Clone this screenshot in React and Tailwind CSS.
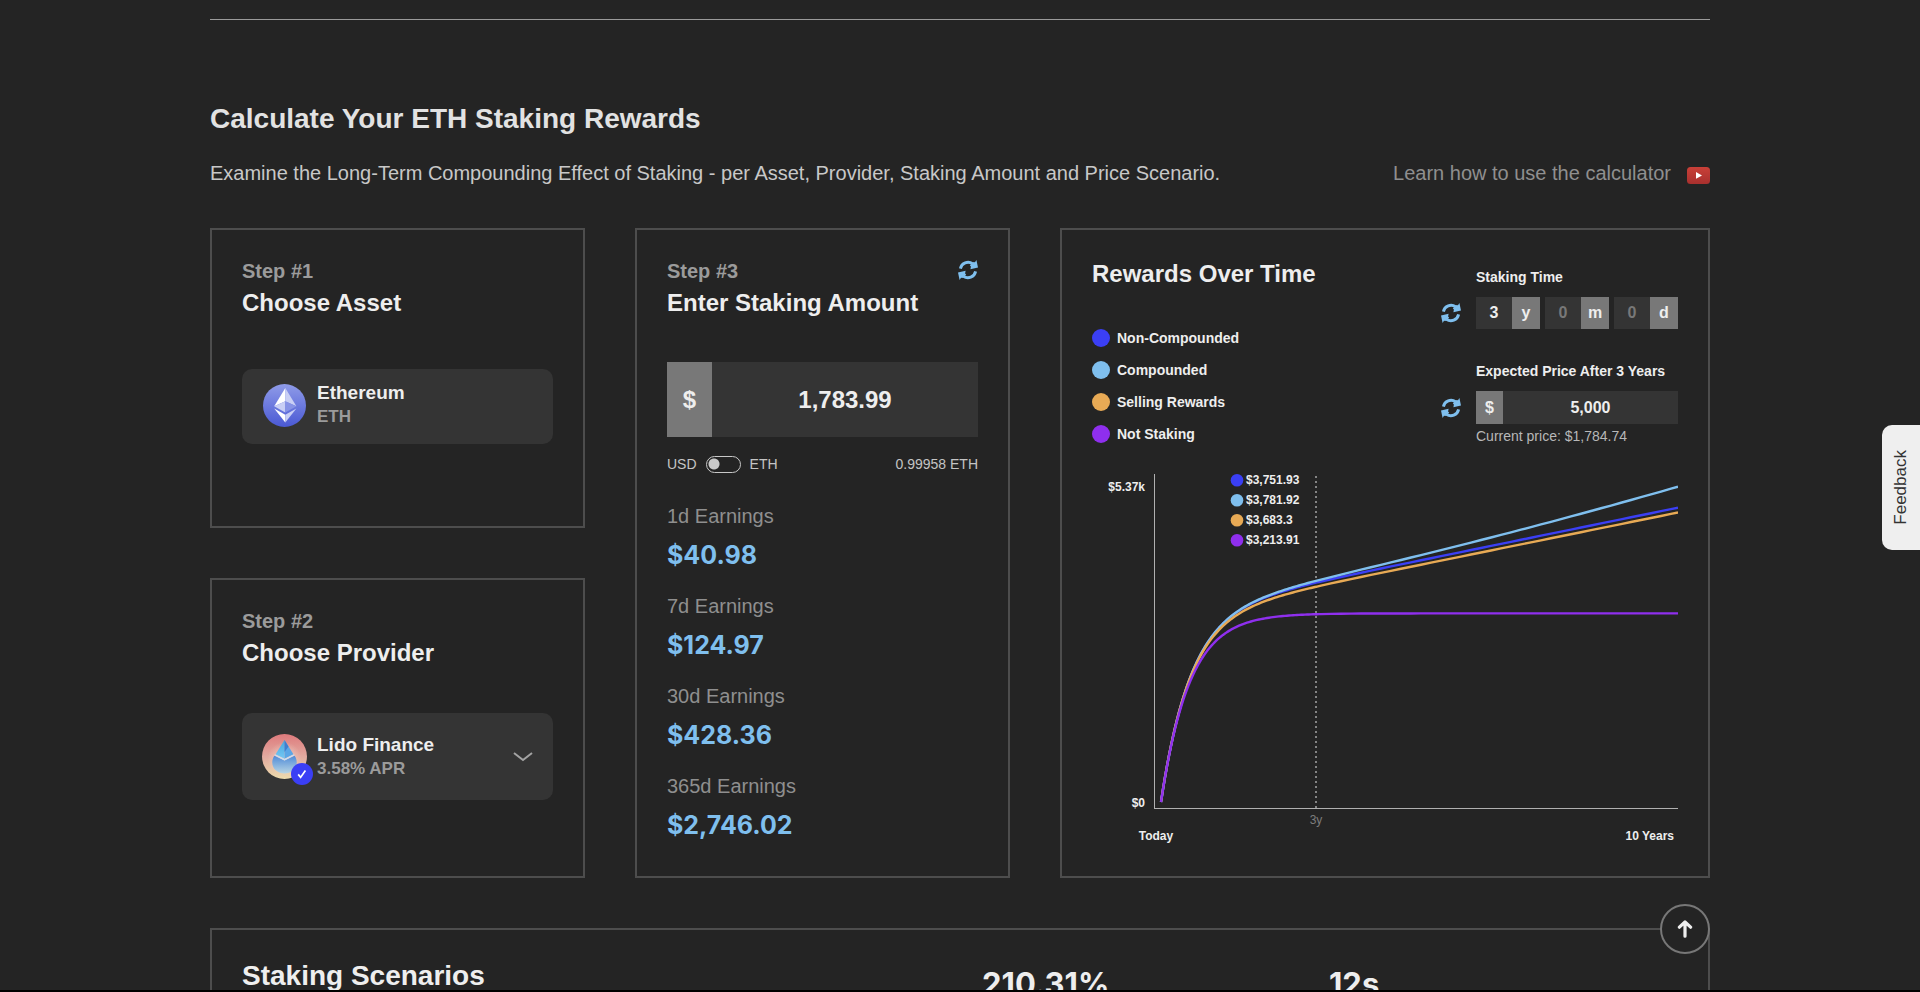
import React from "react";

const earnings = [
  { label: "1d Earnings", value: "$40.98" },
  { label: "7d Earnings", value: "$124.97" },
  { label: "30d Earnings", value: "$428.36" },
  { label: "365d Earnings", value: "$2,746.02" },
];

const legend = [
  { label: "Non-Compounded", dot: "bg-[#3b3ff5]" },
  { label: "Compounded", dot: "bg-[#7fbfee]" },
  { label: "Selling Rewards", dot: "bg-[#e8aa55]" },
  { label: "Not Staking", dot: "bg-[#8f2fee]" },
];

// Share of the expected price reached at distance u along the time axis.
const reached = (u) => 1 - Math.exp(-0.035 * u);

const series = [
  { name: "Non-Compounded", color: "#3b3ff5", value: "$3,751.93", gain: (u) => 0.2045 * u * reached(u) },
  { name: "Compounded", color: "#7fbfee", value: "$3,781.92", gain: (u) => (0.2037 * u + 0.00008 * u * u) * reached(u) },
  { name: "Selling Rewards", color: "#e8aa55", value: "$3,683.3", gain: (u) => 0.203 * (u - 20 * reached(u)) },
  { name: "Not Staking", color: "#8f2fee", value: "$3,213.91", gain: () => 0 },
];

function curve(gain) {
  const points = [];
  for (let u = 0; u < 517; u += u < 160 ? 2 : 10) points.push(u);
  points.push(517);
  return points
    .map((u) => {
      const y = 328 - 188.6 * reached(u) - Math.max(0, gain(u));
      return `${69 + u},${y.toFixed(2)}`;
    })
    .join(" ");
}

function RefreshButton({ label }) {
  return (
    <button type="button" aria-label={label} className="shrink-0 text-[#7fbfee]">
      <svg viewBox="0 0 20 20" className="block size-5" aria-hidden="true">
        <g>
          <path d="M2.4 8.6A7.8 7.8 0 0 1 14.6 3.8" fill="none" stroke="currentColor" strokeWidth="2.9" />
          <path d="M18.4 0 20 7.4 12.4 9.2 12.9 6.4 11.8 5.2 15.6 1.9 17 2.3Z" fill="currentColor" />
        </g>
        <g transform="rotate(180 10 10)">
          <path d="M2.4 8.6A7.8 7.8 0 0 1 14.6 3.8" fill="none" stroke="currentColor" strokeWidth="2.9" />
          <path d="M18.4 0 20 7.4 12.4 9.2 12.9 6.4 11.8 5.2 15.6 1.9 17 2.3Z" fill="currentColor" />
        </g>
      </svg>
    </button>
  );
}

function EthereumLogo() {
  return (
    <svg viewBox="0 0 43 43" className="size-[43px] shrink-0" aria-hidden="true">
      <defs>
        <linearGradient id="ethBg" x1="0" y1="0" x2="0" y2="1">
          <stop offset="0" stopColor="#8f9be8" />
          <stop offset="1" stopColor="#4a59d4" />
        </linearGradient>
      </defs>
      <circle cx="21.5" cy="21.5" r="21.5" fill="url(#ethBg)" />
      <path d="M22.3 4 11.2 22.2 22.3 17.3Z" fill="#fff" />
      <path d="M22.3 4 33.4 22.2 22.3 17.3Z" fill="#c9cff5" />
      <path d="M22.3 17.3 11.2 22.2 22.3 28.6Z" fill="#c9cff5" />
      <path d="M22.3 17.3 33.4 22.2 22.3 28.6Z" fill="#8793e6" />
      <path d="M11.2 24.4 22.3 30.8V38.4Z" fill="#fff" />
      <path d="M33.4 24.4 22.3 30.8V38.4Z" fill="#c9cff5" />
    </svg>
  );
}

function LidoLogo() {
  return (
    <span className="relative size-[45px] shrink-0">
      <svg viewBox="0 0 45 45" className="block size-[45px]" aria-hidden="true">
        <defs>
          <linearGradient id="lidoBg" x1="0" y1="0" x2="0" y2="1">
            <stop offset="0" stopColor="#de7a7c" />
            <stop offset="0.5" stopColor="#e2aaa0" />
            <stop offset="1" stopColor="#eddcae" />
          </linearGradient>
          <radialGradient id="lidoGlow">
            <stop offset="0" stopColor="#f3d6cc" stopOpacity="0.9" />
            <stop offset="1" stopColor="#f3d6cc" stopOpacity="0" />
          </radialGradient>
          <linearGradient id="lidoDrop" x1="0" y1="0" x2="0" y2="1">
            <stop offset="0" stopColor="#4f8bd8" />
            <stop offset="1" stopColor="#b9d6e4" />
          </linearGradient>
          <linearGradient id="lidoLeft" x1="0" y1="0" x2="0" y2="1">
            <stop offset="0" stopColor="#45a6dc" />
            <stop offset="1" stopColor="#74c8f4" />
          </linearGradient>
        </defs>
        <circle cx="22.5" cy="22.5" r="22.5" fill="url(#lidoBg)" />
        <circle cx="22.5" cy="25" r="17" fill="url(#lidoGlow)" />
        <path d="M12.4 21.8C8.8 27 10 33 14 36.6 18.6 40.6 26.4 40.6 31 36.6 35 33 36.2 27 32.6 21.8L22.5 26.6Z" fill="url(#lidoDrop)" />
        <path d="M22.5 6 13.6 20.2 22.5 24.8Z" fill="url(#lidoLeft)" />
        <path d="M22.5 6 31.4 20.2 22.5 24.8Z" fill="#5aa6e6" />
        <path d="M22.5 6 26.5 12.4 22.5 18Z" fill="#3d7fcf" />
        <path d="M12.6 20.8 22.5 25.8 32.4 20.8" fill="none" stroke="#c9dff2" strokeWidth="1.2" />
      </svg>
      <svg viewBox="0 0 22 22" className="absolute -right-1.5 -bottom-1.5 size-[22px]" aria-hidden="true">
        <circle cx="11" cy="11" r="11" fill="#3b3ff5" />
        <path d="M7.2 11.4 9.6 14.4 14.4 7.6" fill="none" stroke="#fff" strokeWidth="1.7" />
      </svg>
    </span>
  );
}

function StepHeading({ step, title }) {
  return (
    <div>
      <p className="text-xl leading-[22px] font-bold text-[#9b9b9b]">{step}</p>
      <h3 className="mt-1 text-2xl leading-[34px] font-bold">{title}</h3>
    </div>
  );
}

function TimeField({ id, unit, value, placeholder, label }) {
  return (
    <div className="flex h-8 min-w-0 flex-1 bg-[#343434] text-base font-bold">
      <input
        id={id}
        aria-label={label}
        defaultValue={value}
        placeholder={placeholder}
        className="w-0 min-w-0 flex-1 bg-transparent text-center outline-none placeholder:text-[#787878]"
      />
      <span className="flex w-7 items-center justify-center bg-[#787878]">{unit}</span>
    </div>
  );
}

function RewardsChart() {
  return (
    <svg viewBox="0 0 586 372" className="mt-[26px] block w-full" role="img" aria-label="Rewards over time">
      <line x1="62.5" y1="0" x2="62.5" y2="335" stroke="#b0b0b0" />
      <line x1="62" y1="334.5" x2="586" y2="334.5" stroke="#b0b0b0" />
      <line x1="224" y1="2" x2="224" y2="334" stroke="#858585" strokeWidth="2" strokeDasharray="2 3" />
      {series.map((s) => (
        <polyline key={s.name} points={curve(s.gain)} fill="none" stroke={s.color} strokeWidth="2.4" strokeLinejoin="round" />
      ))}
      {series.map((s, i) => (
        <circle key={s.name} cx="145" cy={6.3 + i * 20} r="6.3" fill={s.color} />
      ))}
      <g className="fill-[#eeeeee] text-xs font-bold">
        {series.map((s, i) => (
          <text key={s.name} x="154" y={10 + i * 20}>{s.value}</text>
        ))}
        <text x="53" y="17" textAnchor="end">$5.37k</text>
        <text x="53" y="333" textAnchor="end">$0</text>
        <text x="64" y="366" textAnchor="middle">Today</text>
        <text x="582" y="366" textAnchor="end">10 Years</text>
      </g>
      <text x="224" y="350" textAnchor="middle" className="fill-[#7d7d7d] text-xs">3y</text>
    </svg>
  );
}

export default function App() {
  return (
    <div className="h-screen overflow-y-auto bg-[#242424] font-['Liberation_Sans',Arial,sans-serif] text-[#eeeeee] [scrollbar-width:none]">
      <main className="mx-auto w-full max-w-[1500px] pt-[19px]">
        <hr className="border-[#9a9a9a]" />

        <header className="pt-[81px]">
          <h2 className="text-[28px] leading-9 font-bold text-[#e2e2e2]">Calculate Your ETH Staking Rewards</h2>
          <div className="mt-[21px] flex items-center justify-between gap-6 text-xl leading-[30px]">
            <p className="text-[#c8c8c8]">
              Examine the Long-Term Compounding Effect of Staking - per Asset, Provider, Staking Amount and Price Scenario.
            </p>
            <a href="#guide" className="flex shrink-0 items-center gap-4 text-[#8f8f8f]">
              Learn how to use the calculator
              <svg viewBox="0 0 23 17" className="mt-1 w-[23px]" aria-hidden="true">
                <defs>
                  <linearGradient id="play" x1="0" y1="0" x2="0" y2="1">
                    <stop offset="0" stopColor="#c94038" />
                    <stop offset="1" stopColor="#a8302e" />
                  </linearGradient>
                </defs>
                <rect width="23" height="17" rx="3.5" fill="url(#play)" />
                <path d="M9 5 15 8.4 9 11.8Z" fill="#fff" />
              </svg>
            </a>
          </div>
        </header>

        <div className="mt-10 grid grid-cols-[375fr_375fr_650fr] gap-[50px]">
          <div className="flex flex-col gap-[50px]">
            <section className="flex min-h-[300px] flex-1 flex-col border-2 border-[#4d4d4d] p-[30px]">
              <StepHeading step="Step #1" title="Choose Asset" />
              <div className="flex flex-1 flex-col justify-center pb-[3px]">
                <button type="button" className="flex h-[75px] items-center gap-[11px] rounded-[10px] bg-[#343434] pr-5 pb-[3px] pl-[21px] text-left">
                  <EthereumLogo />
                  <span>
                    <span className="block text-[19px] leading-6 font-bold">Ethereum</span>
                    <span className="block text-[17px] leading-6 font-bold text-[#9b9b9b]">ETH</span>
                  </span>
                </button>
              </div>
            </section>
            <section className="flex min-h-[300px] flex-1 flex-col border-2 border-[#4d4d4d] p-[30px]">
              <StepHeading step="Step #2" title="Choose Provider" />
              <div className="flex flex-1 flex-col justify-center pb-[3px]">
                <button type="button" className="flex h-[87px] items-center gap-2.5 rounded-[10px] bg-[#343434] px-5 text-left">
                  <LidoLogo />
                  <span>
                    <span className="block text-[19px] leading-6 font-bold">Lido Finance</span>
                    <span className="block text-[17px] leading-6 font-bold text-[#9b9b9b]">3.58% APR</span>
                  </span>
                  <svg viewBox="0 0 20 10" className="ml-auto w-5" aria-hidden="true">
                    <path d="M1 1 10 8 19 1" fill="none" stroke="#a3a3a3" strokeWidth="2" />
                  </svg>
                </button>
              </div>
            </section>
          </div>

          <section className="border-2 border-[#4d4d4d] p-[30px]">
            <div className="flex items-start justify-between">
              <StepHeading step="Step #3" title="Enter Staking Amount" />
              <RefreshButton label="Reset amount" />
            </div>
            <label className="mt-[42px] flex h-[75px] bg-[#343434] text-2xl font-bold">
              <span className="flex w-[45px] items-center justify-center bg-[#787878]">$</span>
              <input aria-label="Staking amount" defaultValue="1,783.99" className="w-0 min-w-0 flex-1 bg-transparent text-center outline-none" />
            </label>
            <div className="mt-[17px] flex h-5 items-center justify-between text-sm text-[#c4c4c4]">
              <label className="flex items-center gap-[9px]">
                USD
                <input
                  type="checkbox"
                  role="switch"
                  aria-label="Enter amount in ETH"
                  className="h-[17px] w-[35px] appearance-none rounded-full border border-[#c8c8c8] bg-[radial-gradient(circle_at_7px_7px,#c8c8c8_5px,transparent_6px)]"
                />
                ETH
              </label>
              <span>0.99958 ETH</span>
            </div>
            <dl className="mt-[29px] flex flex-col gap-6">
              {earnings.map((e) => (
                <div key={e.label}>
                  <dt className="text-xl leading-[26px] text-[#8f8f8f]">{e.label}</dt>
                  <dd className="mt-3 font-[Inter] text-[25px] leading-7 font-bold text-[#7fbfee]">{e.value}</dd>
                </div>
              ))}
            </dl>
          </section>

          <section className="border-2 border-[#4d4d4d] p-[30px]">
            <div className="flex justify-between">
              <div>
                <h3 className="text-2xl leading-7 font-bold">Rewards Over Time</h3>
                <ul className="mt-10 flex flex-col gap-3">
                  {legend.map((l) => (
                    <li key={l.label} className="flex items-center gap-[7px] text-sm leading-5 font-bold">
                      <span className={`size-[18px] rounded-full ${l.dot}`} />
                      {l.label}
                    </li>
                  ))}
                </ul>
              </div>
              <div className="grid grid-cols-[20px_202px] items-center gap-x-[15px] pt-[7px] text-sm">
                <label htmlFor="years" className="col-start-2 mb-2.5 leading-5 font-bold">Staking Time</label>
                <RefreshButton label="Reset staking time" />
                <div className="flex gap-[5px]">
                  <TimeField id="years" label="Years" unit="y" value="3" />
                  <TimeField id="months" label="Months" unit="m" placeholder="0" />
                  <TimeField id="days" label="Days" unit="d" placeholder="0" />
                </div>
                <label htmlFor="price" className="col-start-2 mt-8 mb-2.5 leading-5 font-bold">Expected Price After 3 Years</label>
                <RefreshButton label="Reset expected price" />
                <div className="flex h-[33px] bg-[#343434] text-base font-bold">
                  <span className="flex w-[27px] items-center justify-center bg-[#787878]">$</span>
                  <input id="price" defaultValue="5,000" className="w-0 min-w-0 flex-1 bg-transparent text-center outline-none" />
                </div>
                <p className="col-start-2 leading-6 text-[#b8b8b8]">Current price: $1,784.74</p>
              </div>
            </div>
            <RewardsChart />
          </section>
        </div>

        <section className="mt-[50px] grid grid-cols-[740fr_347fr_349fr] border-2 border-[#4d4d4d] p-[30px]">
          <h2 className="text-[28px] leading-8 font-bold">Staking Scenarios</h2>
          <p className="pt-1.5 font-[Inter] text-[31px] leading-9 font-bold">210.31%</p>
          <p className="pt-1.5 font-[Inter] text-[31px] leading-9 font-bold">12s</p>
        </section>
      </main>

      <button
        type="button"
        className="fixed top-[425px] right-0 flex h-[125px] w-[38px] items-center justify-center rounded-l-[10px] bg-[#efefef] text-[17px] text-[#333333]"
      >
        <span className="rotate-180 [writing-mode:vertical-rl]">Feedback</span>
      </button>

      <div className="pointer-events-none fixed inset-x-0 bottom-[38px] mx-auto flex max-w-[1500px] justify-end">
        <button type="button" aria-label="Back to top" className="pointer-events-auto flex size-[50px] items-center justify-center rounded-full border-2 border-[#777777] bg-[#242424]">
          <svg viewBox="0 0 16 18" className="w-4" aria-hidden="true">
            <path d="M8 16.2V3M2.4 7.2 8 2 13.6 7.2" fill="none" stroke="#eeeeee" strokeWidth="3.2" strokeLinecap="round" strokeLinejoin="round" />
          </svg>
        </button>
      </div>
      <div className="fixed inset-x-0 bottom-0 h-0.5 bg-black" />
    </div>
  );
}
